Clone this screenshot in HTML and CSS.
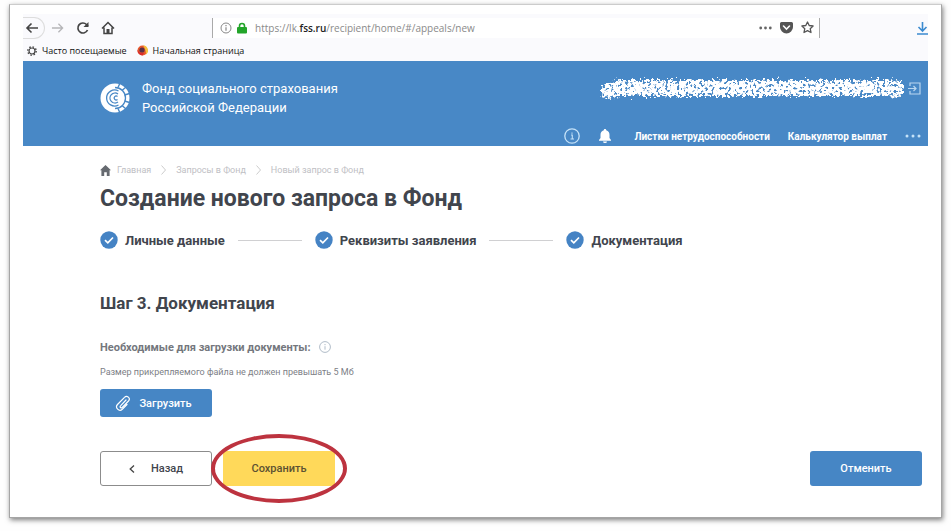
FILE: index.html
```
<!DOCTYPE html>
<html lang="ru">
<head>
    <meta charset="UTF-8">
    <meta name="viewport" content="width=device-width, initial-scale=1.0">
    <title>Создание нового запроса в Фонд</title>
    <link rel="stylesheet" href="styles.css">
</head>
<body>
    <div class="frame">
        <!-- Browser toolbar -->
        <div class="browser">
            <div class="toolbar">
                <button class="tool back-btn" aria-label="Назад">
                    <svg width="14" height="14" viewBox="0 0 14 14" fill="none" stroke="#444" stroke-width="1.6"><path d="M13 7H2M6.500 2.500L2 7l4.500 4.500"/></svg>
                </button>
                <button class="tool forward-btn" aria-label="Вперёд">
                    <svg width="13" height="14" viewBox="0 0 14 14" fill="none" stroke="#b5b5b8" stroke-width="1.4"><path d="M1 7h11M8 2.500L12.500 7 8 11.500"/></svg>
                </button>
                <button class="tool" aria-label="Обновить">
                    <svg width="14" height="14" viewBox="0 0 14 14" fill="none" stroke="#444" stroke-width="1.7"><path d="M11.500 9A5 5 0 1 1 10.500 3.500L12 5"/><path d="M12.500 1v5h-5z" fill="#444" stroke="none"/></svg>
                </button>
                <button class="tool" aria-label="Домой">
                    <svg width="14" height="14" viewBox="0 0 14 14" fill="none" stroke="#444" stroke-width="1.5"><path d="M1 7.500L7 1.500l6 6M3 6.500v6h8v-6"/><path d="M5.500 8h3v4.500h-3z" fill="#444" stroke="none"/></svg>
                </button>
                <div class="url-bar">
                    <svg width="12" height="12" viewBox="0 0 12 12" fill="none" stroke="#888"><circle cx="6" cy="6" r="5"/><path d="M6 5.200v3.600M6 3v1.200" stroke-width="1.200"/></svg>
                    <svg width="10" height="12" viewBox="0 0 10 12"><path d="M2.500 6V4a2.500 2.500 0 0 1 5 0v2" fill="none" stroke="#23a52a" stroke-width="1.600"/><rect y="5" width="10" height="6.500" rx="1" fill="#23a52a"/></svg>
                    <span class="url">https://lk.<b>fss.ru</b>/recipient/home/#/appeals/new</span>
                    <svg class="dots" width="13" height="4" viewBox="0 0 13 4" fill="#666"><circle cx="1.700" cy="2" r="1.400"/><circle cx="6.500" cy="2" r="1.400"/><circle cx="11.300" cy="2" r="1.400"/></svg>
                    <svg width="13" height="12" viewBox="0 0 13 12"><path d="M1.500 0h10A1.500 1.500 0 0 1 13 1.500V5a6.500 6.500 0 0 1-13 0V1.500A1.500 1.500 0 0 1 1.500 0z" fill="#555"/><path d="M3.500 4l3 3 3-3" fill="none" stroke="#fff" stroke-width="1.600" stroke-linecap="round"/></svg>
                    <svg width="13" height="13" viewBox="0 0 13 13"><path d="M6.500 1l1.700 3.500 3.900.5-2.900 2.700.8 3.800-3.500-1.900L3 11.500l.8-3.800L.9 5l3.900-.5z" fill="none" stroke="#555" stroke-width="1.300" stroke-linejoin="round"/></svg>
                </div>
                <button class="tool download" aria-label="Загрузки">
                    <svg width="11" height="14" viewBox="0 0 11 14" fill="none" stroke="#3b8bd0" stroke-width="1.600"><path d="M5.500 1v8.500M1.500 6l4 4 4-4M0 13h11"/></svg>
                </button>
            </div>
            <div class="bookmarks">
                <a href="#"><svg width="10" height="10" viewBox="0 0 10 10" fill="none" stroke="#444"><circle cx="5" cy="5" r="3" stroke-width="1.200"/><circle cx="5" cy="5" r="4.200" stroke-width="1.400" stroke-dasharray="1.500 1.800"/></svg>Часто посещаемые</a>
                <a href="#"><svg width="11" height="11" viewBox="0 0 11 11"><circle cx="5.500" cy="5.500" r="5" fill="#e8562a"/><path d="M6 .5a5 5 0 0 1 3 9C9 6 8 3 6 .5z" fill="#f5c13c"/><circle cx="5" cy="5" r="2.600" fill="#5a3048"/><path d="M.5 5c1 2 3 3.500 6.500 3l-1.500 2.500A5 5 0 0 1 .5 5z" fill="#d92b2b"/></svg>Начальная страница</a>
            </div>
        </div>

        <header class="header">
            <div class="header-top">
                <a class="brand" href="#">
                    <svg width="30" height="30" viewBox="0 0 30 30" fill="none">
                        <circle cx="15" cy="15" r="14.500" fill="#fff"/>
                        <path d="M15 4.500a10.500 10.500 0 0 1 0 21" stroke="#4888c6" stroke-width="1.300"/>
                        <path d="M18 4.500L20 0M22 7.500L26 4M24.500 12l5-1.500M24.500 18l5 1.500M22 22.500l4 3.500M18 25.500l2 4.500" stroke="#4888c6" stroke-width="1.400"/>
                        <path d="M18.500 8a8 8 0 1 0 0 14M18 11a5 5 0 1 0 0 8M17.500 13.500a2 2 0 1 0 0 3" stroke="#4888c6" stroke-width="1.300"/>
                    </svg>
                    <span>Фонд социального страхования<br>Российской Федерации</span>
                </a>
                <div class="user">
                    <!-- Scribbled-out user name -->
                    <svg width="304" height="24" viewBox="0 0 304 24">
                        <defs>
                            <filter id="scribble" x="0" y="0" width="304" height="24" filterUnits="userSpaceOnUse">
                                <feTurbulence type="fractalNoise" baseFrequency="0.35" numOctaves="2" seed="4" result="noise"/>
                                <feDisplacementMap in="SourceGraphic" in2="noise" scale="12" xChannelSelector="R" yChannelSelector="G" result="rough"/>
                                <feColorMatrix in="noise" type="matrix" values="0 0 0 0 1  0 0 0 0 1  0 0 0 0 1  0 0 -10 0 6.6" result="holes"/>
                                <feComposite in="rough" in2="holes" operator="in"/>
                            </filter>
                        </defs>
                        <path d="M8 15L20 12 290 12 297 13" fill="none" stroke="#fff" stroke-width="16" stroke-linecap="round" filter="url(#scribble)"/>
                    </svg>
                    <button class="icon-btn" aria-label="Выход">
                        <svg width="13" height="13" viewBox="0 0 13 13" fill="none" stroke="#b9d6f0" stroke-width="1.200"><path d="M2 4V1h10v11H2V9M0 6.500h8M5.500 4L8 6.500 5.500 9"/></svg>
                    </button>
                </div>
            </div>
            <nav class="nav">
                <button class="icon-btn" aria-label="Информация">
                    <svg width="16" height="16" viewBox="0 0 16 16" fill="none" stroke="#c5e2f8"><circle cx="8" cy="8" r="7.200" stroke-width="1.300"/><path d="M7 7h1.300v4M8 4.500v1.300M6.500 11h3.500" stroke-width="1.100"/></svg>
                </button>
                <button class="icon-btn bell" aria-label="Уведомления">
                    <svg width="14" height="14" viewBox="0 0 14 14" fill="#fff"><path d="M7 0c.8 0 1.200.5 1.200 1.200C10.500 1.800 11.500 3.500 11.500 6v3L13 11v.8H1V11l1.500-2V6c0-2.500 1-4.200 3.300-4.800C5.800.5 6.200 0 7 0zM5 12.500h4a2 1.500 0 0 1-4 0z"/></svg>
                </button>
                <a href="#">Листки нетрудоспособности</a>
                <a href="#">Калькулятор выплат</a>
                <button class="icon-btn" aria-label="Ещё">
                    <svg width="16" height="4" viewBox="0 0 16 4" fill="#c5e2f8"><circle cx="2" cy="2" r="1.500"/><circle cx="8" cy="2" r="1.500"/><circle cx="14" cy="2" r="1.500"/></svg>
                </button>
            </nav>
        </header>

        <main class="content">
            <div class="breadcrumbs">
                <svg width="11" height="11" viewBox="0 0 11 11" fill="#666a70"><path d="M5.500 0L11 5.300H9.600V11H6.800V7.200H4.200V11H1.400V5.300H0z"/></svg>
                <a href="#">Главная</a>
                <svg class="sep" width="5" height="10" viewBox="0 0 5 10" fill="none" stroke="#ccc"><path d="M.5.5L4.500 5 .5 9.500"/></svg>
                <a href="#">Запросы в Фонд</a>
                <svg class="sep" width="5" height="10" viewBox="0 0 5 10" fill="none" stroke="#ccc"><path d="M.5.5L4.500 5 .5 9.500"/></svg>
                <span>Новый запрос в Фонд</span>
            </div>

            <h1>Создание нового запроса в Фонд</h1>

            <div class="steps">
                <div class="step">
                    <svg width="18" height="18" viewBox="0 0 18 18"><circle cx="9" cy="9" r="8.700" fill="#4583c4"/><path d="M5 9.200l2.800 2.600L13 6.500" fill="none" stroke="#fff" stroke-width="1.700"/></svg>
                    Личные данные
                </div>
                <div class="line"></div>
                <div class="step">
                    <svg width="18" height="18" viewBox="0 0 18 18"><circle cx="9" cy="9" r="8.700" fill="#4583c4"/><path d="M5 9.200l2.800 2.600L13 6.500" fill="none" stroke="#fff" stroke-width="1.700"/></svg>
                    Реквизиты заявления
                </div>
                <div class="line"></div>
                <div class="step">
                    <svg width="18" height="18" viewBox="0 0 18 18"><circle cx="9" cy="9" r="8.700" fill="#4583c4"/><path d="M5 9.200l2.800 2.600L13 6.500" fill="none" stroke="#fff" stroke-width="1.700"/></svg>
                    Документация
                </div>
            </div>

            <h2>Шаг 3. Документация</h2>

            <div class="docs-label">
                Необходимые для загрузки документы:
                <svg width="12" height="12" viewBox="0 0 12 12" fill="none" stroke="#b0bcc8"><circle cx="6" cy="6" r="5.400"/><path d="M6 5.200v3.500M6 3v1.200"/></svg>
            </div>
            <p class="hint">Размер прикрепляемого файла не должен превышать 5 Мб</p>

            <button class="btn btn-blue upload">
                <svg width="16" height="16" viewBox="0 0 16 16" fill="none" stroke="#fff" stroke-width="1.200" stroke-linecap="round"><path d="M11 5L5.500 10.800a1.200 1.200 0 0 0 1.700 1.700L13.500 6a2.600 2.600 0 0 0-4-3.700L2.500 9.500a3.400 3.400 0 0 0 4.800 4.800L12 9.500"/></svg>
                Загрузить
            </button>

            <div class="actions">
                <button class="btn btn-white">
                    <svg width="6" height="8" viewBox="0 0 6 8" fill="none" stroke="#444" stroke-width="1.300"><path d="M5 .5L1.200 4 5 7.500"/></svg>
                    Назад
                </button>
                <div class="save">
                    <button class="btn btn-yellow">Сохранить</button>
                    <span class="marker"></span>
                </div>
                <button class="btn btn-blue cancel">Отменить</button>
            </div>
        </main>
    </div>
</body>
</html>
```
FILE: styles.css
```
* {
    box-sizing: border-box;
}

body {
    margin: 0;
    padding: 4px 9px 13px;
    background-color: #fefefe;
    font-family: Roboto, "Liberation Sans", sans-serif;
    color: #41454d;
}

svg {
    display: block;
    flex-shrink: 0;
}

a {
    color: inherit;
    text-decoration: none;
}

button {
    font-family: inherit;
    cursor: pointer;
}

.frame {
    padding: 9px 13px 31px;
    border: 1px solid #a5a5a5;
    border-top-color: #ccc;
    background-color: #fff;
    box-shadow: 1px 2px 5px rgba(0, 0, 0, 0.5);
}

/* Browser chrome */
.browser {
    background-color: #fafafd;
    font-family: "Open Sans", "Noto Sans", sans-serif;
}

.toolbar {
    display: flex;
    align-items: center;
    height: 27px;
}

.tool,
.icon-btn {
    display: flex;
    align-items: center;
    justify-content: center;
    padding: 0;
    border: none;
    background: none;
}

.tool {
    width: 25px;
    height: 20px;
}

.back-btn {
    width: 22px;
    height: 22px;
    padding-right: 4px;
    border: 1px solid #ddd;
    border-left: none;
    border-radius: 0 50% 50% 0;
}

.url-bar {
    flex: 1;
    display: flex;
    align-items: center;
    gap: 8px;
    height: 20px;
    margin: 0 97px 0 92px;
    padding: 0 5px 0 7px;
    border-left: 1px solid #aaa;
    border-right: 1px solid #aaa;
    background-color: #fff;
}

.url-bar svg:nth-of-type(2) {
    margin-left: -3px;
}

.url {
    flex: 1;
    font-size: 10px;
    color: #8a8a8a;
}

.url b {
    font-weight: 600;
    color: #222;
}

.download {
    width: 11px;
}

.bookmarks {
    display: flex;
    gap: 10px;
    height: 20px;
    padding: 0 4px 1px;
    font-size: 9px;
    color: #111;
}

.bookmarks a {
    display: flex;
    align-items: center;
    gap: 5px;
}

/* Blue site header */
.header {
    padding: 18px 7px 0 77px;
    background-color: #4888c6;
    color: #fff;
}

.header-top {
    display: flex;
    justify-content: space-between;
}

.brand {
    display: flex;
    align-items: center;
    gap: 12px;
    font-size: 13px;
    line-height: 19px;
}

.user {
    display: flex;
    align-items: center;
    gap: 4px;
    height: 18px;
}

.nav {
    display: flex;
    align-items: center;
    justify-content: flex-end;
    gap: 18px;
    height: 20px;
    margin-top: 9px;
    font-size: 10px;
    font-weight: bold;
}

.bell {
    margin-right: 4px;
}

/* Page content */
.content {
    padding: 17px 6px 0 77px;
}

.breadcrumbs {
    display: flex;
    align-items: center;
    gap: 10px;
    height: 14px;
    font-size: 9px;
    color: #c0c0c4;
}

.breadcrumbs svg:first-child {
    margin-right: -4px;
}

h1 {
    margin: 8px 0 0;
    font-size: 23px;
    line-height: 28px;
}

.steps {
    display: flex;
    align-items: center;
    gap: 13px;
    height: 20px;
    margin-top: 17px;
    font-size: 13px;
    font-weight: bold;
}

.step {
    display: flex;
    align-items: center;
    gap: 7px;
}

.line {
    width: 64px;
    height: 1px;
    background-color: #d0d0d2;
}

h2 {
    margin: 41px 0 0;
    font-size: 17px;
    line-height: 24px;
}

.docs-label {
    display: flex;
    align-items: center;
    gap: 8px;
    height: 16px;
    margin-top: 24px;
    font-size: 11px;
    font-weight: bold;
    color: #74777d;
}

.hint {
    margin: 10px 0;
    font-size: 9px;
    line-height: 14px;
    color: #7d8086;
}

.btn {
    display: flex;
    align-items: center;
    justify-content: center;
    width: 112px;
    height: 35px;
    padding: 0;
    border: none;
    border-radius: 3px;
    font-size: 11px;
    font-weight: 500;
}

.btn-blue {
    background-color: #4686c5;
    color: #fff;
}

.btn-white {
    gap: 16px;
    border: 1px solid #8c8c8c;
    background-color: #fff;
    color: #41454d;
}

.btn-yellow {
    border-radius: 0;
    background-color: #ffd95a;
    color: #5c5132;
}

.upload {
    gap: 8px;
    height: 28px;
    padding-right: 5px;
}

.actions {
    display: flex;
    gap: 11px;
    margin-top: 34px;
}

.save {
    position: relative;
}

/* Red oval around the save button */
.marker {
    position: absolute;
    inset: -17px -12px;
    border: 4px solid #bd333f;
    border-radius: 50%;
    pointer-events: none;
}

.cancel {
    margin-left: auto;
}
```
